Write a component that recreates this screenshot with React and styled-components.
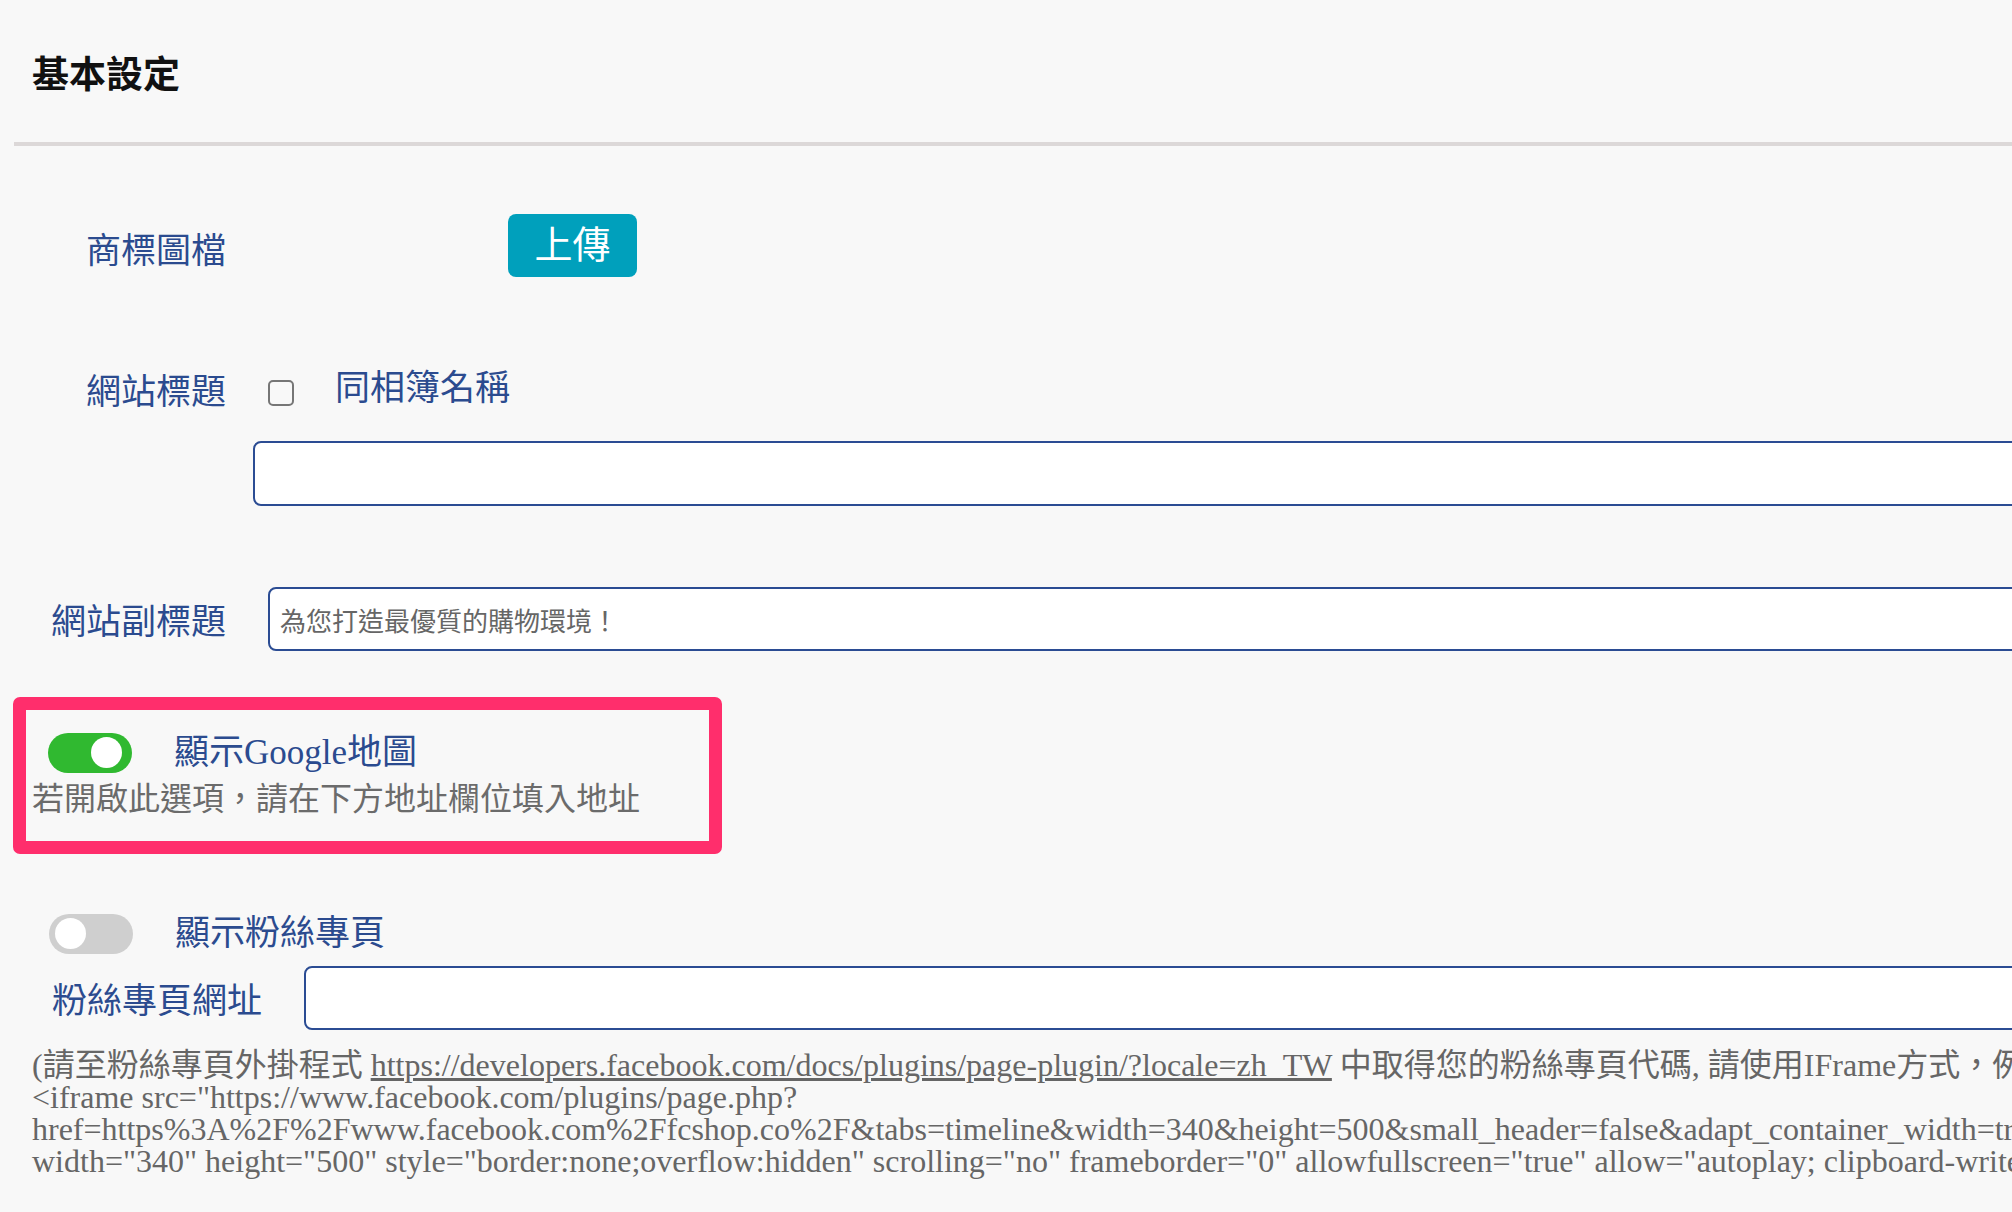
import styled, { createGlobalStyle } from "styled-components";

const GlobalStyle = createGlobalStyle`
  html, body {
    margin: 0;
    padding: 0;
    background: #f8f8f8;
    overflow: hidden;
  }
  body {
    font-family: "Liberation Serif", "Noto Sans CJK TC", serif;
  }
`;

const Page = styled.div`
  width: 2700px;
  min-height: 1212px;
  padding-left: 14px;
  box-sizing: border-box;
  background: #f8f8f8;
`;

const Header = styled.div`
  height: 142px;
  padding: 2px 0 0 18px;
  box-sizing: border-box;
  display: flex;
  align-items: center;
  font-family: "Noto Sans CJK TC", sans-serif;
  font-size: 37px;
  font-weight: 700;
  color: #111;
`;

const Divider = styled.div`
  height: 4px;
  background: #dcd8d8;
`;

const Row = styled.div`
  display: flex;
  align-items: center;
  margin-top: ${(p) => p.$top}px;
`;

const Label = styled.div`
  width: ${(p) => p.$width || 212}px;
  flex-shrink: 0;
  text-align: right;
  font-size: 35px;
  line-height: 40px;
  color: #2b4b8f;
  margin-top: ${(p) => p.$shift || 0}px;
`;

const UploadButton = styled.button`
  margin-left: 282px;
  width: 129px;
  height: 63px;
  border: none;
  border-radius: 8px;
  background: #00a0bc;
  color: #fff;
  font-family: "Noto Sans CJK TC", sans-serif;
  font-size: 38px;
  line-height: 1;
  padding: 0 0 8px;
  cursor: pointer;
`;

const Check = styled.input.attrs({ type: "checkbox" })`
  appearance: none;
  margin: 0 0 0 42px;
  width: 26px;
  height: 26px;
  box-sizing: border-box;
  border: 2px solid #767676;
  border-radius: 5px;
  background: transparent;
`;

const CheckText = styled.span`
  position: relative;
  top: -4px;
  margin-left: 41px;
  font-size: 35px;
  line-height: 40px;
  color: #2b4b8f;
`;

const TextBox = styled.input.attrs({ type: "text" })`
  display: block;
  flex: 1;
  height: ${(p) => p.$height || 64}px;
  margin: ${(p) => p.$margin || "0 0 0 42px"};
  padding: 0 10px;
  box-sizing: border-box;
  border: 2px solid #2b4c93;
  border-radius: 8px;
  background: #fff;
  font-family: "Liberation Sans", "Noto Sans CJK TC", sans-serif;
  font-size: 26px;
  color: #666;
  outline: none;
`;

const WideBox = styled(TextBox)`
  width: calc(100% - 239px);
`;

const Highlight = styled.div`
  width: 709px;
  height: 157px;
  margin: 46px 0 0 -1px;
  padding: 23px 0 0 6px;
  box-sizing: border-box;
  border: 13px solid #ff2e6c;
  border-radius: 7px;
`;

const ToggleRow = styled.div`
  display: flex;
  align-items: center;
  margin: ${(p) => p.$margin || 0};
`;

const Toggle = styled.div`
  position: relative;
  width: 84px;
  height: 40px;
  flex-shrink: 0;
  border-radius: 20px;
  background: ${(p) => (p.$on ? "#30b930" : "#cfcfcf")};
  margin-left: ${(p) => p.$left}px;
`;

const Knob = styled.span`
  position: absolute;
  top: 4px;
  left: ${(p) => (p.$on ? 43 : 6)}px;
  width: 31px;
  height: 31px;
  border-radius: 50%;
  background: #fff;
`;

const ToggleLabel = styled.span`
  margin-left: 42px;
  font-size: 35px;
  line-height: 40px;
  color: #2b4b8f;
`;

const Hint = styled.div`
  margin-top: 3px;
  font-family: "Noto Sans CJK TC", sans-serif;
  font-size: 32px;
  line-height: 40px;
  color: #6b6b6b;
`;

const Note = styled.div`
  margin-top: 19px;
  padding-left: 18px;
  font-size: 32px;
  line-height: 32px;
  color: #666;
  white-space: nowrap;
`;

const NoteLink = styled.a`
  color: #666;
  text-decoration: underline;
`;

const Switch = ({ on, left }) => (
  <Toggle $on={on} $left={left}>
    <Knob $on={on} />
  </Toggle>
);

const App = () => {
  return (
    <>
      <GlobalStyle />
      <Page>
        <Header>基本設定</Header>
        <Divider />

        <Row $top={68}>
          <Label $shift={12}>商標圖檔</Label>
          <UploadButton>上傳</UploadButton>
        </Row>

        <Row $top={96}>
          <Label>網站標題</Label>
          <Check />
          <CheckText>同相簿名稱</CheckText>
        </Row>
        <Row $top={28}>
          <WideBox $height={65} $margin="0 0 0 239px" />
        </Row>

        <Row $top={81}>
          <Label $shift={8}>網站副標題</Label>
          <TextBox defaultValue="為您打造最優質的購物環境！" />
        </Row>

        <Highlight>
          <ToggleRow>
            <Switch on left={16} />
            <ToggleLabel>顯示Google地圖</ToggleLabel>
          </ToggleRow>
          <Hint>若開啟此選項，請在下方地址欄位填入地址</Hint>
        </Highlight>

        <ToggleRow $margin="60px 0 0 0">
          <Switch left={35} />
          <ToggleLabel>顯示粉絲專頁</ToggleLabel>
        </ToggleRow>

        <Row $top={12}>
          <Label $width={248} $shift={8}>
            粉絲專頁網址
          </Label>
          <TextBox />
        </Row>

        <Note>
          (請至粉絲專頁外掛程式{" "}
          <NoteLink href="#">
            https://developers.facebook.com/docs/plugins/page-plugin/?locale=zh_TW
          </NoteLink>{" "}
          中取得您的粉絲專頁代碼, 請使用IFrame方式，例如：
          <br />
          {'<iframe src="https://www.facebook.com/plugins/page.php?'}
          <br />
          {
            "href=https%3A%2F%2Fwww.facebook.com%2Ffcshop.co%2F&tabs=timeline&width=340&height=500&small_header=false&adapt_container_width=true&hide_cover=false&show_facepile=true&appId"
          }
          <br />
          {
            'width="340" height="500" style="border:none;overflow:hidden" scrolling="no" frameborder="0" allowfullscreen="true" allow="autoplay; clipboard-write; encrypted-media; picture-in-picture; web-share"></iframe>)'
          }
        </Note>
      </Page>
    </>
  );
};

export default App;
